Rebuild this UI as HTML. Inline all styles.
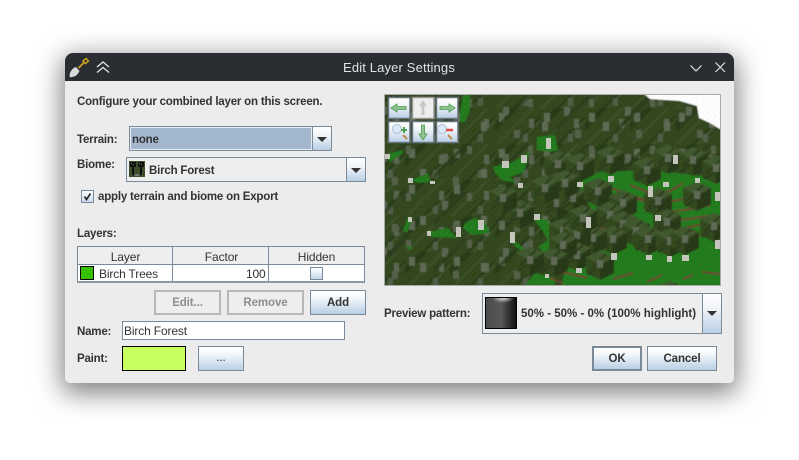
<!DOCTYPE html>
<html><head><meta charset="utf-8"><style>
*{box-sizing:border-box}
html,body{margin:0;padding:0;width:799px;height:460px;overflow:hidden;background:#fff;font-family:"Liberation Sans",sans-serif}
#win{position:absolute;left:65px;top:53px;width:669px;height:330px;background:#ececec;border-radius:8px 8px 5px 5px;box-shadow:0 7px 26px 3px rgba(0,0,0,.5)}
#bar{position:absolute;left:65px;top:53px;width:669px;height:28px;background:#2a2e32;border-radius:8px 8px 0 0}
.a{position:absolute;white-space:nowrap;font-size:12px;color:#333;line-height:14px;letter-spacing:-.15px}
.b{font-weight:bold;font-size:11.5px;letter-spacing:-.2px}
.btn{position:absolute;border:1px solid #7a8a99;background:linear-gradient(#fff,#f4f7fa 30%,#b8cfe5);font-size:11.5px;font-weight:bold;color:#333;text-align:center;border-width:2px 2px;letter-spacing:-.1px}
.dis{background:#eee;border:2px solid #b8b8b8;color:#8f8f8f}
.arr{position:absolute;width:0;height:0;border-left:5px solid transparent;border-right:5px solid transparent;border-top:5px solid #333}
.cell{position:absolute;text-align:center;font-size:12px;color:#333;line-height:18px;letter-spacing:-.1px}
</style></head><body>
<div id="win"></div>
<div id="bar"></div>
<div class="a" style="left:343px;top:60px;font-size:13px;color:#e2e2e2;line-height:15px;letter-spacing:.15px">Edit Layer Settings</div>
<svg style="position:absolute;left:65px;top:53px" width="60" height="28">
<path d="M5 20Q3.500 25.500 7 24Q12 23.500 14.500 18L11 14Q7 15 5 20Z" fill="#dadada"/>
<path d="M13.500 15L19 9.500" stroke="#c9a21e" stroke-width="1.800"/>
<path d="M18 8L21 5.500L23.500 8L20.500 10.500Z" fill="none" stroke="#d0a81e" stroke-width="1.400"/>
<path d="M32 14L38 9L44 14M32 19.500L38 14.500L44 19.500" fill="none" stroke="#e4e4e4" stroke-width="1.300"/>
</svg>
<svg style="position:absolute;left:685px;top:58px" width="45" height="20">
<path d="M5.500 7.500L11 13L16.500 7.500M30.500 4.500L40 14M40 4.500L30.500 14" fill="none" stroke="#e0e0e0" stroke-width="1.200"/>
</svg>

<div class="a b" style="left:77px;top:95px">Configure your combined layer on this screen.</div>
<div class="a b" style="left:77px;top:133px">Terrain:</div>
<div style="position:absolute;left:129px;top:126px;width:203px;height:25px;border:1px solid #7a8a99;background:#eee"></div>
<div style="position:absolute;left:130px;top:127px;width:182px;height:23px;background:#a3b8cf;border:1px solid #e4ebf3"></div>
<div class="a b" style="left:132px;top:133px">none</div>
<div style="position:absolute;left:312px;top:127px;width:19px;height:23px;background:linear-gradient(#fff,#f2f5f9 35%,#b8cfe5);border-left:1px solid #7a8a99"></div>
<div class="arr" style="left:317px;top:137px"></div>

<div class="a b" style="left:77px;top:158px">Biome:</div>
<div style="position:absolute;left:126px;top:157px;width:240px;height:25px;border:1px solid #7a8a99;background:#eee"></div>
<div style="position:absolute;left:346px;top:158px;width:19px;height:23px;background:linear-gradient(#fff,#f2f5f9 35%,#b8cfe5);border-left:1px solid #7a8a99"></div>
<div class="arr" style="left:351px;top:168px"></div>
<svg style="position:absolute;left:129px;top:161px" width="16" height="16">
<rect width="16" height="16" fill="#3c4f2a"/>
<path d="M1 1h6v5h-2v8h-2v-8h-2zM9 1h6v5h-2v8h-2v-8h-2z" fill="#111"/>
<path d="M2 2h1v1h-1zM4 3h1v1h-1zM10 2h1v1h-1zM12 3h1v1h-1zM6 13h4v2h-4z" fill="#777"/>
</svg>
<div class="a b" style="left:149px;top:164px">Birch Forest</div>
<div style="position:absolute;left:81px;top:190px;width:13px;height:13px;border:1px solid #7a8a99;background:linear-gradient(#fff,#c5d7ea)"></div>
<svg style="position:absolute;left:81px;top:190px" width="13" height="13"><path d="M3.500 6.500L5.500 9.500L9.500 3.500" fill="none" stroke="#222" stroke-width="1.600"/></svg>
<div class="a b" style="left:98px;top:190px">apply terrain and biome on Export</div>

<div class="a b" style="left:77px;top:227px">Layers:</div>
<div style="position:absolute;left:77px;top:246px;width:288px;height:37px;border:1px solid #7a8a99;border-bottom:2px solid #8c9aa8;background:#fff"></div>
<div style="position:absolute;left:78px;top:247px;width:286px;height:18px;background:#eee;border-bottom:1px solid #7a8a99"></div>
<div style="position:absolute;left:172px;top:247px;width:1px;height:34px;background:#7a8a99"></div>
<div style="position:absolute;left:268px;top:247px;width:1px;height:34px;background:#7a8a99"></div>
<div class="cell" style="left:78px;top:248px;width:95px">Layer</div>
<div class="cell" style="left:174px;top:248px;width:95px">Factor</div>
<div class="cell" style="left:269px;top:248px;width:95px">Hidden</div>
<div style="position:absolute;left:80px;top:266px;width:14px;height:14px;background:#37c000;border:1px solid #000"></div>
<div class="a" style="left:99px;top:267px">Birch Trees</div>
<div class="a" style="left:246px;top:267px">100</div>
<div style="position:absolute;left:310px;top:267px;width:13px;height:13px;border:1px solid #7a8a99;background:linear-gradient(#fff,#c5d7ea)"></div>

<div class="btn dis" style="left:154px;top:290px;width:67px;height:25px;line-height:23px">Edit...</div>
<div class="btn dis" style="left:227px;top:290px;width:77px;height:25px;line-height:23px">Remove</div>
<div class="btn" style="left:310px;top:290px;width:56px;height:25px;line-height:24px;border-width:1px">Add</div>
<div class="a b" style="left:77px;top:325px">Name:</div>
<div style="position:absolute;left:122px;top:321px;width:223px;height:19px;background:#fff;border:1px solid #7a8a99"></div>
<div class="a" style="left:124px;top:324px">Birch Forest</div>
<div class="a b" style="left:77px;top:352px">Paint:</div>
<div style="position:absolute;left:122px;top:346px;width:64px;height:25px;background:#c8ff5f;border:1px solid #000"></div>
<div class="btn" style="left:198px;top:346px;width:46px;height:25px;line-height:23px;border-width:1px;font-weight:normal">...</div>

<svg style="position:absolute;left:384px;top:94px" width="337" height="192" viewBox="384 94 337 192">
<defs>
<pattern id="f" x="0" y="0" width="45" height="36" patternUnits="userSpaceOnUse">
<rect width="45" height="36" fill="#31461f"/>
<path d="M-5 20L20 -5h8L-5 28ZM12 41L50 3v8L22 41Z" fill="#263a18"/>
<path d="M0 36L36 0h4L4 36ZM20 36L45 11v4L26 36Z" fill="#3b5027"/>
<rect x="4" y="5" width="6" height="9" fill="#5d6a53"/>
<rect x="34" y="11" width="5" height="9" fill="#5a6650"/>
<rect x="28" y="26" width="5" height="8" fill="#505e46"/>
</pattern>
<pattern id="g" x="7" y="3" width="61" height="47" patternUnits="userSpaceOnUse">
<rect x="8" y="10" width="6" height="9" fill="#5a6650"/>
<rect x="33" y="2" width="5" height="8" fill="#566248"/>
<rect x="47" y="25" width="6" height="9" fill="#5f6b55"/>
<rect x="19" y="33" width="6" height="8" fill="#556148"/>
<path d="M0 30L30 0h5L0 35Z" fill="#263a18" opacity=".7"/>
</pattern>
<pattern id="n" x="0" y="0" width="6" height="6" patternUnits="userSpaceOnUse">
<path d="M0 0h1v1h-1zM3 1h1v1h-1zM1 3h1v1h-1zM5 4h1v1h-1z" fill="#000" opacity=".13"/>
<path d="M2 0h1v1h-1zM5 2h1v1h-1zM3 4h1v1h-1zM0 5h1v1h-1z" fill="#fff" opacity=".07"/>
</pattern>
<g id="t">
<path d="M-14 -9L0 -15L14 -9L14 7L0 14L-14 7Z" fill="#33481f"/>
<path d="M0 -1L14 -9V7L0 14Z" fill="#263819"/>
<path d="M-14 -9L0 -15L14 -9L0 -1Z" fill="#41582e"/>
<path d="M-10 4L6 -12M-12 9L12 -7" stroke="#2a3c1a" stroke-width="2"/>
<rect x="-3" y="-6" width="6" height="8" fill="#5f6b55"/>
</g>
<filter id="s" x="-5%" y="-5%" width="110%" height="110%"><feGaussianBlur stdDeviation=".5"/></filter>
<filter id="w" x="-5%" y="-5%" width="110%" height="110%"><feGaussianBlur stdDeviation=".35"/></filter>
<linearGradient id="bg" x1="0" y1="0" x2="0" y2="1"><stop offset="0" stop-color="#fff"/><stop offset=".35" stop-color="#f2f5f9"/><stop offset="1" stop-color="#b8cfe5"/></linearGradient>
<clipPath id="c"><rect x="385" y="95" width="335" height="190"/></clipPath>
</defs>
<rect x="385" y="95" width="335" height="190" fill="#fff"/>
<g clip-path="url(#c)">
<g filter="url(#s)">
<rect x="380" y="90" width="345" height="200" fill="url(#f)"/>
<rect x="380" y="90" width="345" height="200" fill="url(#g)"/>
<path d="M643 93L650 99L680 101L697 106L699 118L710 123L718 128L722 130V93Z" fill="#fff"/>
<g fill="#217c1e">
<path d="M460 112L463 95H470V110L465 122H460Z"/>
<path d="M537 137L555 135L558 150L550 152L537 150Z"/>
<path d="M505 166L525 155L530 150L524 172L510 177Z"/>
<path d="M493 167L508 163L510 177L517 183L502 180L495 173Z"/>
<path d="M385 155L402 150L403 153L390 162Z"/>
<path d="M412 180L428 173L430 182L418 183Z"/>
<path d="M465 223L475 218L485 222L490 233L472 235L463 228Z"/>
<path d="M428 232L448 228L457 238L432 237Z"/>
<path d="M532 217L548 220L555 243L545 253L538 247L548 240L540 227Z"/>
<path d="M510 240L518 243L527 252L517 248Z"/>
<path d="M525 285L535 273L555 278L555 285Z"/>
<path d="M403 230L408 217L412 220L407 233Z"/>
<path d="M405 245L413 248L410 250Z"/>
<path d="M575 180L600 172L650 170L722 178V290H560L565 270L590 258L610 225L592 210L585 198Z"/>
</g>
<g fill="none" stroke="#6a4530" stroke-width="2">
<path d="M598 183L630 195L650 202M630 185L650 193L670 191L683 183M633 198L647 202M667 202L690 198L707 192M670 212L697 208L710 205M680 220L717 215M683 228L717 222M677 237L707 235M598 228L608 230M702 272L720 274M613 279L633 273M647 282L662 275M683 279L693 275M563 272L587 278M550 278L563 283"/>
</g>
<g>
<use href="#t" x="558" y="166"/><use href="#t" x="580" y="168"/><use href="#t" x="610" y="161"/><use href="#t" x="647" y="172"/><use href="#t" x="668" y="160"/><use href="#t" x="693" y="162"/><use href="#t" x="716" y="170"/>
<use href="#t" x="557" y="205"/><use href="#t" x="573" y="200"/><use href="#t" x="598" y="193"/><use href="#t" x="565" y="185"/><use href="#t" x="545" y="190"/>
<use href="#t" x="623" y="205"/><use href="#t" x="610" y="217"/><use href="#t" x="658" y="203"/><use href="#t" x="667" y="224"/><use href="#t" x="697" y="197"/><use href="#t" x="714" y="228"/>
<use href="#t" x="623" y="226"/><use href="#t" x="636" y="233"/><use href="#t" x="613" y="241"/><use href="#t" x="648" y="241"/><use href="#t" x="670" y="243"/><use href="#t" x="685" y="241"/>
<use href="#t" x="593" y="240"/><use href="#t" x="563" y="233"/><use href="#t" x="577" y="237"/><use href="#t" x="577" y="257"/><use href="#t" x="563" y="247"/><use href="#t" x="600" y="266"/><use href="#t" x="554" y="263"/><use href="#t" x="670" y="296"/>
<use href="#t" x="583" y="220"/><use href="#t" x="520" y="215"/><use href="#t" x="530" y="262"/><use href="#t" x="503" y="200"/>
</g>
<rect x="380" y="90" width="345" height="200" fill="url(#n)"/>
</g>
<g fill="#c4c6be" filter="url(#w)">
<rect x="648" y="186" width="5" height="11"/><rect x="586" y="217" width="5" height="11"/><rect x="655" y="215" width="6" height="6"/><rect x="682" y="255" width="7" height="6"/><rect x="611" y="253" width="6" height="7"/><rect x="667" y="256" width="5" height="6"/><rect x="646" y="255" width="6" height="5"/><rect x="576" y="268" width="6" height="5"/><rect x="608" y="176" width="6" height="6"/><rect x="663" y="182" width="6" height="5"/><rect x="577" y="182" width="6" height="5"/><rect x="715" y="192" width="5" height="9"/><rect x="715" y="240" width="5" height="9"/><rect x="695" y="178" width="5" height="5"/><rect x="673" y="155" width="5" height="9"/>
<rect x="502" y="161" width="7" height="7"/><rect x="521" y="155" width="6" height="8"/><rect x="518" y="183" width="5" height="5"/><rect x="408" y="178" width="5" height="5"/><rect x="385" y="154" width="5" height="5"/><rect x="478" y="220" width="6" height="10"/><rect x="456" y="227" width="5" height="10"/><rect x="427" y="231" width="4" height="5"/><rect x="408" y="217" width="4" height="5"/><rect x="510" y="232" width="5" height="11"/><rect x="534" y="214" width="6" height="6"/><rect x="545" y="274" width="4" height="4"/>
<rect x="546" y="138" width="5" height="11"/><rect x="430" y="181" width="5" height="3"/>
</g>
</g>
<rect x="384.500" y="94.500" width="336" height="191" fill="none" stroke="#aaa"/>
<g>
<g stroke="#66737f" stroke-width="1.500">
<rect x="388.500" y="97.500" width="21.500" height="21" fill="url(#bg)"/>
<rect x="412.500" y="97.500" width="21.500" height="21" fill="#eee" stroke="#999"/>
<rect x="436.500" y="97.500" width="21.500" height="21" fill="url(#bg)"/>
<rect x="388.500" y="121.500" width="21.500" height="21" fill="url(#bg)"/>
<rect x="412.500" y="121.500" width="21.500" height="21" fill="url(#bg)"/>
<rect x="436.500" y="121.500" width="21.500" height="21" fill="url(#bg)"/>
</g>
<g fill="#8fc48f" stroke="#4e9a4e" stroke-width=".8">
<path d="M391 108L397 104V106.500H406V109.500H397V112Z"/>
<path d="M455 108L449 104V106.500H440V109.500H449V112Z"/>
<path d="M423 140L419 134H421.500V125H424.500V134H427Z"/>
</g>
<path d="M423 100L427 106H424.500V115H421.500V106H419Z" fill="#c8c8c8"/>
<circle cx="397" cy="129" r="4.500" fill="#dbe8f5" stroke="#a8c0da"/>
<circle cx="442" cy="129" r="4.500" fill="#dbe8f5" stroke="#a8c0da"/>
<path d="M404 127v6M401 130h6" stroke="#4fa04f" stroke-width="2"/>
<path d="M446 130h7" stroke="#e04a4a" stroke-width="2.500"/>
<path d="M403 135l4 4M448 135l4 4" stroke="#c08a4a" stroke-width="2"/>
</g>
</svg>

<div class="a b" style="left:384px;top:307px">Preview pattern:</div>
<div style="position:absolute;left:482px;top:293px;width:240px;height:41px;border:1px solid #7a8a99;background:#eee"></div>
<div style="position:absolute;left:702px;top:294px;width:19px;height:39px;background:linear-gradient(#fff,#f2f5f9 35%,#b8cfe5);border-left:1px solid #7a8a99"></div>
<div class="arr" style="left:707px;top:311px"></div>
<div style="position:absolute;left:485px;top:297px;width:32px;height:32px;border:1px solid #000;background:radial-gradient(ellipse 11px 5px at 17px 0,#d8d8d8,rgba(200,200,200,0)),linear-gradient(90deg,#4c4c4c 0,#585858 50%,#111 100%)"></div>
<div class="a b" style="left:521px;top:307px;letter-spacing:0">50% - 50% - 0% (100% highlight)</div>
<div class="btn" style="left:592px;top:346px;width:50px;height:25px;line-height:23px">OK</div>
<div class="btn" style="left:647px;top:346px;width:70px;height:25px;line-height:24px;border-width:1px">Cancel</div>
</body></html>
